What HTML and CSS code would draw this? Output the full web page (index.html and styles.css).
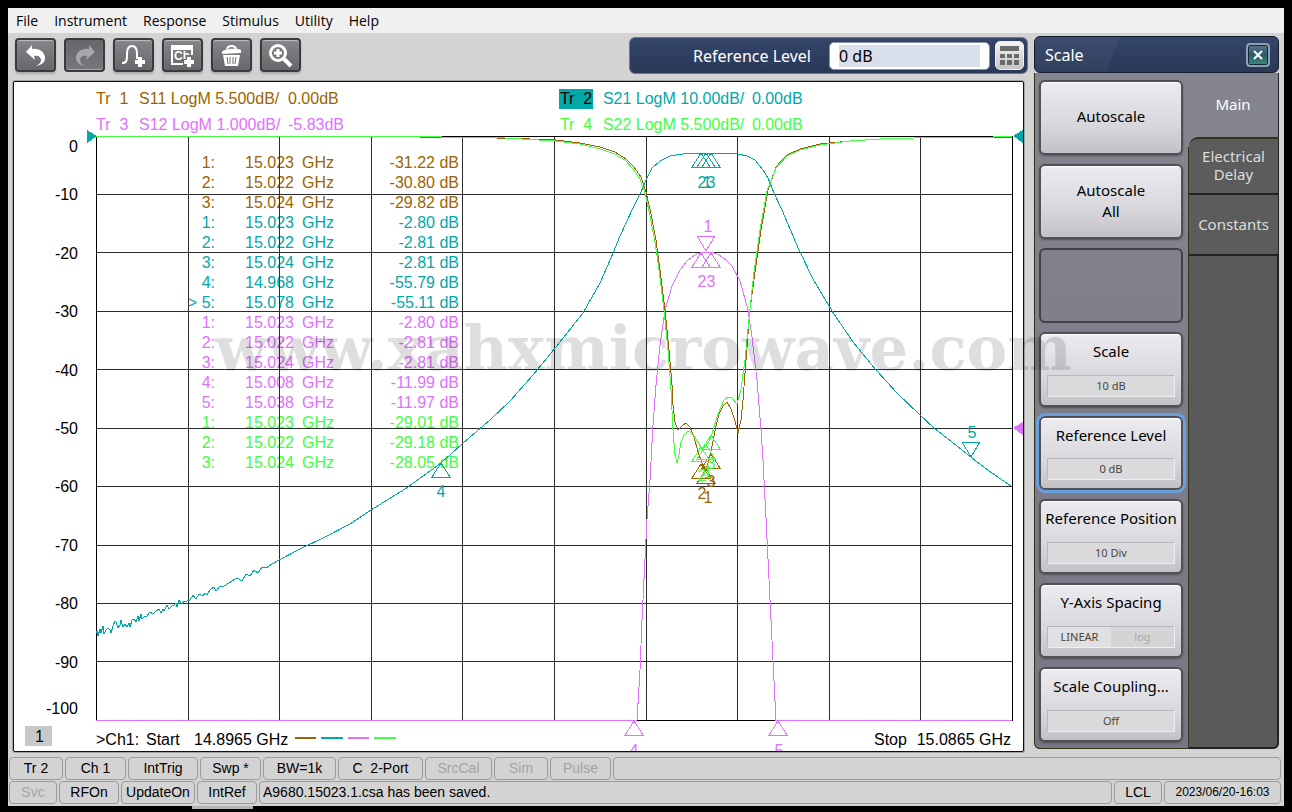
FILE: index.html
```
<!DOCTYPE html>
<html lang="en">
<head>
    <meta charset="UTF-8">
    <meta name="viewport" content="width=device-width, initial-scale=1.0">
    <title>Network Analyzer</title>
    <link rel="stylesheet" href="styles.css">
</head>
<body>
    <div class="app">
        <nav class="menu">
            <a href="#">File</a>
            <a href="#">Instrument</a>
            <a href="#">Response</a>
            <a href="#">Stimulus</a>
            <a href="#">Utility</a>
            <a href="#">Help</a>
        </nav>

        <div class="main">
            <div class="left">
                <div class="toolbar">
                    <button class="tool" aria-label="Undo">
                        <svg viewBox="0 0 41 33"><path class="fill" d="M11 13 17 6v4c7-1 13 3 13 9 0 4-3 7-9 8 4-2 5-4 5-6 0-3-3-5-7-4l1 4z"/></svg>
                    </button>
                    <button class="tool off" aria-label="Redo">
                        <svg viewBox="0 0 41 33"><path class="fill" d="M31 13 25 6v4c-7-1-13 3-13 9 0 4 3 7 9 8-4-2-5-4-5-6 0-3 3-5 7-4l-1 4z"/></svg>
                    </button>
                    <button class="tool" aria-label="Add trace">
                        <svg viewBox="0 0 41 33"><path class="line" d="M9 24c5 0 5-3 5-9 0-5 1-8 5-8s5 3 5 8v5"/><path class="plus" d="M27 18v10M22 23h10"/></svg>
                    </button>
                    <button class="tool" aria-label="Add channel">
                        <svg viewBox="0 0 41 33"><path class="fill" d="M9 6h22v5H9z"/><path class="line" d="M10 10v15h12M30 10v6"/><text class="cap" x="12" y="21">Ch</text><path class="gap" d="M27 16v13M21 23h12"/><path class="plus" d="M27 18v10M22 23h10"/></svg>
                    </button>
                    <button class="tool" aria-label="Delete">
                        <svg viewBox="0 0 41 33"><path class="line" d="M16 10c1-4 8-4 9 0"/><path class="fill" d="M11 13c2-4 17-4 19-2v3l-19 1z"/><path class="fill" d="M12 16h17l-2 11H14z"/><path class="slot" d="M16 18l1 7M19 18v7M22 18v7M25 18l-1 7"/></svg>
                    </button>
                    <button class="tool" aria-label="Zoom">
                        <svg viewBox="0 0 41 33"><circle class="line big" cx="18" cy="14" r="7.500"/><path class="plus thin" d="M18 10v8M14 14h8"/><path class="plus" d="M24 20l7 7"/></svg>
                    </button>
                    <div class="entry">
                        <label for="level">Reference Level</label>
                        <input type="text" id="level" value="0 dB">
                        <button class="keypad" aria-label="Keypad">
                            <svg viewBox="0 0 29 29"><path d="M5 5h19v5H5zM5 13h5v4H5zM12 13h5v4h-5zM19 13h5v4h-5zM5 19h5v5H5zM12 19h5v5h-5zM19 19h5v5h-5z"/></svg>
                        </button>
                    </div>
                </div>

                <div class="graph">
                    <div class="traces">
                        <div class="trace c1"><span class="tr">Tr&nbsp; 1</span><span class="fmt">S11 LogM 5.500dB/</span><span>0.00dB</span></div>
                        <div class="trace c2"><span class="tr active">Tr&nbsp; 2</span><span class="fmt">S21 LogM 10.00dB/</span><span>0.00dB</span></div>
                        <div class="trace c3"><span class="tr">Tr&nbsp; 3</span><span class="fmt">S12 LogM 1.000dB/</span><span>-5.83dB</span></div>
                        <div class="trace c4"><span class="tr">Tr&nbsp; 4</span><span class="fmt">S22 LogM 5.500dB/</span><span>0.00dB</span></div>
                    </div>

                    <div class="plot">
                        <table class="markers">
                            <tr class="c1"><td>1:</td><td>15.023</td><td>GHz</td><td>-31.22 dB</td></tr>
                            <tr class="c1"><td>2:</td><td>15.022</td><td>GHz</td><td>-30.80 dB</td></tr>
                            <tr class="c1"><td>3:</td><td>15.024</td><td>GHz</td><td>-29.82 dB</td></tr>
                            <tr class="c2"><td>1:</td><td>15.023</td><td>GHz</td><td>-2.80 dB</td></tr>
                            <tr class="c2"><td>2:</td><td>15.022</td><td>GHz</td><td>-2.81 dB</td></tr>
                            <tr class="c2"><td>3:</td><td>15.024</td><td>GHz</td><td>-2.81 dB</td></tr>
                            <tr class="c2"><td>4:</td><td>14.968</td><td>GHz</td><td>-55.79 dB</td></tr>
                            <tr class="c2"><td>&gt; 5:</td><td>15.078</td><td>GHz</td><td>-55.11 dB</td></tr>
                            <tr class="c3"><td>1:</td><td>15.023</td><td>GHz</td><td>-2.80 dB</td></tr>
                            <tr class="c3"><td>2:</td><td>15.022</td><td>GHz</td><td>-2.81 dB</td></tr>
                            <tr class="c3"><td>3:</td><td>15.024</td><td>GHz</td><td>-2.81 dB</td></tr>
                            <tr class="c3"><td>4:</td><td>15.008</td><td>GHz</td><td>-11.99 dB</td></tr>
                            <tr class="c3"><td>5:</td><td>15.038</td><td>GHz</td><td>-11.97 dB</td></tr>
                            <tr class="c4"><td>1:</td><td>15.023</td><td>GHz</td><td>-29.01 dB</td></tr>
                            <tr class="c4"><td>2:</td><td>15.022</td><td>GHz</td><td>-29.18 dB</td></tr>
                            <tr class="c4"><td>3:</td><td>15.024</td><td>GHz</td><td>-28.05 dB</td></tr>
                        </table>

                        <svg class="chart" viewBox="14 135 1009 616">
                            <defs>
                                <path id="up" d="M0 0 9 14H-9z"/>
                                <path id="down" d="M0 0 9-15H-9z"/>
                            </defs>

                            <!-- grid -->
                            <path class="grid" d="M188.500 136v584M279.500 136v584M371.500 136v584M462.500 136v584M554.500 136v584M646.500 136v584M737.500 136v584M829.500 136v584M920.500 136v584"/>
                            <path class="grid" d="M96 194.500h916M96 252.500h916M96 311.500h916M96 369.500h916M96 428.500h916M96 486.500h916M96 545.500h916M96 603.500h916M96 661.500h916"/>
                            <rect class="frame" x="96.500" y="136.500" width="916" height="584"/>

                            <g class="axis">
                                <text x="78" y="152">0</text>
                                <text x="78" y="200">-10</text>
                                <text x="78" y="259">-20</text>
                                <text x="78" y="317">-30</text>
                                <text x="78" y="376">-40</text>
                                <text x="78" y="434">-50</text>
                                <text x="78" y="492">-60</text>
                                <text x="78" y="551">-70</text>
                                <text x="78" y="609">-80</text>
                                <text x="78" y="668">-90</text>
                                <text x="78" y="714">-100</text>
                            </g>

                            <!-- S11 -->
                            <polyline class="curve c1" points="420,137.500 441,137.500 497,138 530,139 556,140 580,143 600,147 615,152 626,159 634,167 641,177 646,192 650,209 656,240 660,270 665,310 669,350 672,385 673,405 675,422 678,430 682,426 686,423 690,427 694,437 698,452 702,463 706,469 709,460 712,446 716,426 719,414 723,406 727,402 731,409 735,421 738,433 741,420 743,400 746,360 750,309 755,272 761,230 768,190 776,167 787,155 800,149 820,144 850,141 880,139 931,137.500 1012,137.500"/>
                            <!-- S21 -->
                            <polyline class="curve c2" points="96,633 97,631 98,636 100,629 101,633 103,626 104,634 106,630 108,628 110,630 111,633 113,626 115,621 116,622 118,628 120,625 121,620 123,627 125,624 127,627 129,623 130,627 132,620 134,619 136,622 138,616 139,621 141,614 142,619 144,617 147,616 150,612 153,614 156,611 159,609 161,613 163,609 164,611 167,605 169,609 172,606 174,605 176,603 177,607 179,600 182,604 184,601 187,601 190,600 193,595 195,598 196,599 199,594 203,596 205,593 207,595 210,590 214,587 216,591 220,586 224,586 229,583 232,581 237,578 242,581 246,574 250,576 254,570 258,573 262,567 266,568 272,564 279,560 300,549 325,537 350,524 371,510 405,489 441,463 462,444 490,420 510,401 533,375 556,347 583,313 600,283 611,258 620,236 633,208 641,192 645,182 652,168 660,161 670,156 683,154 692,153 715,153 738,154 747,156 755,160 763,170 768,178 774,193 782,210 799,250 813,279 832,311 853,342 876,370 897,393 920,415 934,428 952,442 972,458 992,473 1011,486"/>
                            <!-- S12 -->
                            <polyline class="curve c3" points="96,720.500 637,720.500 640,670 642,620 647,519 650,480 653,425 656,385 660,345 665,310 672,286 680,270 687,261 695,255 702,252 712,252 719,255 726,260 732,266 740,281 748,310 752,337 757,380 761,430 763,460 766,518 771,620 776,720.500 1012,720.500"/>
                            <!-- S22 -->
                            <polyline class="curve c4" points="96,136.500 441,136.500 442,137.500 497,137.500 530,139.500 556,141 580,144 600,149 615,154 625,160 633,169 640,179 645,193 649,211 655,242 659,270 664,310 668,350 671,390 673,430 675,455 677,463 679,455 681,442 684,435 688,431 693,434 697,441 701,447 704,448 708,443 712,434 716,420 720,409 724,400 728,397 732,398 737,404 741,389 745,360 750,309 754,272 760,230 767,191 776,168 787,156 800,150 820,145 850,141 880,139 931,137.500 993,137.500 994,136.500 1012,136.500"/>

                            <!-- reference level arrows -->
                            <path class="solid c2" d="M87 130v13l10-7zM1023 130v13l-10-7z"/>
                            <path class="solid c3" d="M1023 422v13l-10-7z"/>

                            <g class="mark c1">
                                <use href="#up" x="701" y="464"/>
                                <use href="#up" x="706" y="469"/>
                                <use href="#up" x="711" y="454"/>
                                <text x="702" y="499">2</text>
                                <text x="708" y="503">1</text>
                                <text x="711" y="487">3</text>
                            </g>
                            <g class="mark c2">
                                <use href="#up" x="701" y="153"/>
                                <use href="#up" x="706" y="153"/>
                                <use href="#up" x="711" y="153"/>
                                <text x="702" y="188">2</text>
                                <text x="707" y="188">1</text>
                                <text x="711" y="188">3</text>
                                <use href="#up" x="441" y="463"/>
                                <text x="441" y="497">4</text>
                                <use href="#down" x="971" y="457"/>
                                <text x="972" y="438">5</text>
                            </g>
                            <g class="mark c3">
                                <use href="#down" x="706" y="251"/>
                                <text x="708" y="232">1</text>
                                <use href="#up" x="701" y="253"/>
                                <use href="#up" x="711" y="253"/>
                                <text x="702" y="287">2</text>
                                <text x="711" y="287">3</text>
                                <use href="#up" x="634" y="721"/>
                                <use href="#up" x="778" y="721"/>
                                <text x="634" y="756">4</text>
                                <text x="779" y="756">5</text>
                            </g>
                            <g class="mark c4">
                                <use href="#up" x="701" y="447"/>
                                <use href="#up" x="706" y="445"/>
                                <use href="#up" x="711" y="435"/>
                                <text x="702" y="481">2</text>
                                <text x="708" y="478">1</text>
                                <text x="711" y="469">3</text>
                            </g>

                            <!-- channel line -->
                            <rect class="chan" x="25" y="726" width="27" height="20"/>
                            <text x="35" y="742">1</text>
                            <text x="96" y="745">&gt;Ch1:</text>
                            <text x="146" y="745">Start</text>
                            <text x="194" y="745">14.8965 GHz</text>
                            <path class="dash c1" d="M295 738h21"/>
                            <path class="dash c2" d="M321 738h22"/>
                            <path class="dash c3" d="M348 738h21"/>
                            <path class="dash c4" d="M374 738h22"/>
                            <text x="874" y="745">Stop</text>
                            <text class="end" x="1011" y="745">15.0865 GHz</text>
                        </svg>
                    </div>
                </div>
            </div>

            <div class="panel">
                <div class="title">
                    <span>Scale</span>
                    <button class="close" aria-label="Close"><svg viewBox="0 0 10 10"><path d="M1 1l8 8M9 1l-8 8"/></svg></button>
                </div>
                <div class="body">
                    <div class="keys">
                        <button class="key plain">Autoscale</button>
                        <button class="key plain">Autoscale<br>All</button>
                        <button class="key empty" disabled aria-label="Empty"></button>
                        <button class="key">Scale<span class="val">10 dB</span></button>
                        <button class="key selected">Reference Level<span class="val">0 dB</span></button>
                        <button class="key">Reference Position<span class="val">10 Div</span></button>
                        <button class="key">Y-Axis Spacing<span class="val two"><span class="on">LINEAR</span><span class="dim">log</span></span></button>
                        <button class="key">Scale Coupling...<span class="val">Off</span></button>
                    </div>
                    <div class="tabs">
                        <button class="tab current">Main</button>
                        <button class="tab first">Electrical<br>Delay</button>
                        <button class="tab">Constants</button>
                        <div class="rest"></div>
                    </div>
                </div>
            </div>
        </div>

        <div class="status">
            <div class="row row1">
                <button>Tr 2</button>
                <button>Ch 1</button>
                <button>IntTrig</button>
                <button>Swp *</button>
                <button>BW=1k</button>
                <button>C&nbsp; 2-Port</button>
                <button disabled>SrcCal</button>
                <button disabled>Sim</button>
                <button disabled>Pulse</button>
                <div class="cell"></div>
            </div>
            <div class="row row2">
                <button disabled>Svc</button>
                <button>RFOn</button>
                <button>UpdateOn</button>
                <button>IntRef</button>
                <div class="cell">A9680.15023.1.csa has been saved.</div>
                <button>LCL</button>
                <div class="cell date">2023/06/20-16:03</div>
            </div>
        </div>

        <div class="watermark">www.xahxmicrowave.com</div>
        <div class="nub"></div>
    </div>
</body>
</html>
```
FILE: styles.css
```
*{
    box-sizing: border-box;
}
body{
    margin: 0;
    padding: 8px;
    background: black;
    font-family: "Noto Sans", sans-serif;
}
button, input{
    font-family: inherit;
    margin: 0;
    padding: 0;
}
.app{
    position: relative;
    background: #d3d3d3;
    padding-bottom: 1px;
}
.c1{ color: #9c6400; }
.c2{ color: #00a8a8; }
.c3{ color: #e070ff; }
.c4{ color: #40ff40; }

/* menu */
.menu{
    height: 25px;
    background: #f0f0f0;
    display: flex;
    align-items: center;
    gap: 16px;
    padding: 0 0 1px 8px;
    font: 14px "Open Sans", sans-serif;
}
.menu a{
    color: black;
    text-decoration: none;
}
.main{
    display: flex;
    gap: 6px;
    padding-right: 5px;
}
.left{
    flex: 1;
    min-width: 0;
}

/* toolbar */
.toolbar{
    height: 48px;
    display: flex;
    align-items: flex-start;
    gap: 8px;
    padding: 4px 0 0 7px;
}
.tool{
    width: 41px;
    height: 34px;
    margin-top: 1px;
    border: 2px solid #3a3a3e;
    border-radius: 4px;
    background: linear-gradient(#85858a, #66666b);
    box-shadow: inset 0 1px 1px #c0c0c4, 0 2px 2px #aaa;
}
.tool svg{
    display: block;
    width: 41px;
    height: 33px;
    margin: -2px;
}
.tool.off{
    background: linear-gradient(#66666b, #77777c);
    box-shadow: inset 0 -1px 1px #a8a8ac;
}
.fill{ fill: white; }
.off .fill{ fill: #a8a8ac; }
.line{
    fill: none;
    stroke: white;
    stroke-width: 2;
}
.big{ stroke-width: 3; }
.plus{
    fill: none;
    stroke: white;
    stroke-width: 4;
}
.thin{ stroke-width: 3; }
.gap{
    stroke: #707075;
    stroke-width: 6;
}
.slot{
    stroke: #6c6c71;
    stroke-width: 1;
}
.cap{
    fill: white;
    font: bold 12px "Liberation Sans", sans-serif;
}
.entry{
    margin-left: auto;
    width: 399px;
    height: 37px;
    display: flex;
    align-items: center;
    justify-content: flex-end;
    padding-right: 3px;
    border: 1px solid #6c7a94;
    border-radius: 6px;
    background: linear-gradient(#33456a, #2b3857);
    color: white;
    font-size: 16px;
}
.entry input{
    width: 161px;
    height: 28px;
    margin: 0 5px 0 18px;
    padding: 2px 9px;
    border: 1px solid #8a93a6;
    border-radius: 5px;
    background: linear-gradient(#d8deea, #d8deea) content-box, white;
    font-size: 16px;
}
.keypad{
    width: 29px;
    height: 29px;
    border: 1px solid #eee;
    border-radius: 5px;
    background: linear-gradient(#f4f4f6, #c4c4c8);
}
.keypad svg{
    display: block;
    margin: -1px;
    fill: #6a6a6a;
}

/* graph window */
.graph{
    margin: 0 4px 0 5px;
    border: 1px solid #101008;
    border-radius: 2px;
    background: white;
    box-shadow: 0 0 0 1px #a4a4a0;
    overflow: hidden;
    font: 16px "Liberation Sans", sans-serif;
}
.traces{
    display: grid;
    grid-template-columns: 46% 1fr;
    row-gap: 6px;
    padding: 7px 0 0 81px;
    line-height: 20px;
}
.trace{
    display: flex;
}
.tr{
    width: 34px;
    margin-right: 10px;
    padding-left: 1px;
}
.fmt{
    width: 149px;
}
.trace:nth-child(even){
    margin-left: 37px;
}
.active{
    background: #00a8a8;
    color: black;
}
.plot{
    position: relative;
}
.markers{
    position: absolute;
    left: 172px;
    top: 18px;
    width: 273px;
    border-collapse: collapse;
    line-height: 20px;
}
.markers td{
    padding: 0;
    text-align: right;
    white-space: pre;
}
.markers td:nth-child(1){ width: 29px; }
.markers td:nth-child(2){ width: 79px; }
.markers td:nth-child(3){
    padding-left: 8px;
    text-align: left;
}
.chart{
    position: relative;
    display: block;
    width: 100%;
    overflow: visible;
}
.chart path, .chart polyline, .chart rect{
    shape-rendering: crispEdges;
}
.grid{
    stroke: #2c2c2c;
}
.frame{
    fill: none;
    stroke: black;
}
.axis, .end{
    text-anchor: end;
}
.curve{
    fill: none;
    stroke: currentColor;
}
.solid{
    fill: currentColor;
}
.mark{
    text-anchor: middle;
}
.mark use{
    fill: none;
    stroke: currentColor;
}
.mark text{
    fill: currentColor;
}
.dash{
    stroke: currentColor;
    stroke-width: 2;
}
.chan{
    fill: #c8c8c8;
}

/* softkey panel */
.panel{
    width: 245px;
    margin-top: 3px;
    margin-bottom: 3px;
    display: flex;
    flex-direction: column;
}
.title{
    height: 37px;
    display: flex;
    align-items: center;
    justify-content: space-between;
    padding: 0 8px 0 10px;
    border: 1px solid #141c2c;
    border-radius: 6px;
    background: linear-gradient(110deg, rgba(255, 255, 255, 0.04) 33%, transparent 33%), linear-gradient(#34466b, #2b3857);
    color: white;
    font-size: 16px;
}
.close{
    width: 24px;
    height: 24px;
    display: flex;
    align-items: center;
    justify-content: center;
    border: 2px solid #8fa0b4;
    border-radius: 4px;
    background: linear-gradient(#5a7488, #2c5a66 50%, #3c8c84);
    box-shadow: inset 0 0 0 1px #16283c;
}
.close svg{
    width: 10px;
    height: 10px;
    stroke: white;
    stroke-width: 2;
}
.body{
    flex: 1;
    display: flex;
    border-radius: 0 0 6px 6px;
    background: #5a5a5a;
}
.keys{
    width: 155px;
    display: flex;
    flex-direction: column;
    gap: 9px;
    padding: 7px 5px 6px 4px;
    border: 1px solid #33331c;
    border-top: 0;
    border-radius: 0 0 0 6px;
    background: linear-gradient(#85858f, #777785);
}
.key{
    flex: 1;
    display: flex;
    flex-direction: column;
    align-items: center;
    justify-content: space-between;
    padding: 7px 6px 8px;
    border: 2px solid #505056;
    border-radius: 6px;
    background: linear-gradient(#ececf0, #d8d8dc 60%, #c2c2c6);
    box-shadow: inset 0 1px 1px white, 0 1px 2px #505056;
    color: black;
    font-size: 15px;
    line-height: 21px;
    white-space: nowrap;
}
.plain{
    justify-content: center;
}
.empty{
    background: transparent;
    border-color: #404046;
    box-shadow: none;
}
.selected{
    outline: 3px solid #68a0dc;
    outline-offset: 0;
}
.val{
    width: 100%;
    height: 22px;
    border: 1px solid #b8b8ba;
    border-right-color: #eee;
    border-bottom-color: #eee;
    background: #dadadc;
    color: #45453c;
    font-size: 11px;
    line-height: 20px;
}
.two{
    display: flex;
}
.two span{
    flex: 1;
}
.on{ background: #e0e0e2; }
.dim{
    background: #d4d4d6;
    color: #a8a8a8;
}
.tabs{
    flex: 1;
    display: flex;
    flex-direction: column;
}
.tab{
    height: 61px;
    padding-bottom: 2px;
    border: 0;
    border-right: 1px solid #222;
    border-bottom: 2px solid #222;
    background: #5c5c5c;
    color: #dcdcdc;
    font-size: 15px;
    line-height: 18px;
}
.current{
    height: 64px;
    margin-left: -1px;
    background: #84848e;
    border-bottom: 0;
    color: white;
    box-shadow: 0 10px 0 #84848e;
}
.first{
    height: 58px;
    position: relative;
    border-top: 2px solid #33331c;
    border-radius: 9px 0 0 0;
}
.rest{
    flex: 1;
    border-right: 2px solid #222;
    border-bottom: 2px solid #222;
    border-radius: 0 0 6px 0;
}

/* status bar */
.status{
    margin-top: 5px;
    padding: 0 3px 0 1px;
    font-family: "Liberation Sans", sans-serif;
}
.row{
    display: grid;
    gap: 2px;
    margin-bottom: 1px;
}
.row1{
    grid-template-columns: 54px 61px 70px 61px 73px 85px 67px 54px 61px 1fr;
}
.row2{
    grid-template-columns: 48px 60px 74px 60px 1fr 48px 117px;
}
.row button, .cell{
    height: 23px;
    border: 1px solid #9c9c9c;
    border-radius: 4px;
    background: transparent;
    color: black;
    font-size: 14px;
    line-height: 21px;
    white-space: nowrap;
}
.row button:disabled{
    color: #a4a4a4;
}
.cell{
    padding-left: 3px;
}
.row .date{
    padding: 0;
    font-size: 12px;
    text-align: center;
}

.watermark{
    position: absolute;
    left: 207px;
    top: 305px;
    color: rgba(0, 0, 0, 0.13);
    font: bold 61px "DejaVu Serif", serif;
    pointer-events: none;
}
.nub{
    position: absolute;
    left: 184px;
    top: 100%;
    width: 61px;
    height: 3px;
    background: #b4b4ac;
}
```
